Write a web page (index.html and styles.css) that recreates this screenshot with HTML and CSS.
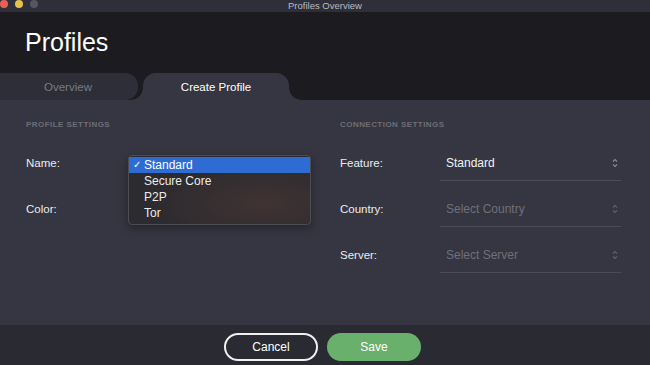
FILE: index.html
```html
<!DOCTYPE html>
<html lang="en">
<head>
    <meta charset="UTF-8">
    <meta name="viewport" content="width=device-width, initial-scale=1.0">
    <title>Profiles Overview</title>
    <link rel="stylesheet" href="styles.css">
</head>
<body>

<div class="titlebar">
    <div class="lights">
        <span class="light red"></span>
        <span class="light yellow"></span>
        <span class="light gray"></span>
    </div>
    <div class="window-title">Profiles Overview</div>
    <div></div>
</div>

<div class="header">
    <h1>Profiles</h1>
    <div class="tabs">
        <div class="tab">Overview</div>
        <div class="tab active">Create Profile</div>
    </div>
</div>

<div class="content">
    <div class="column">
        <div class="section-title">Profile Settings</div>
        <div class="row">
            <label>Name:</label>
            <div class="field-slot">
                <!-- open popup of the profile type select -->
                <div class="menu">
                    <div class="menu-item selected"><span class="check">&#10003;</span>Standard</div>
                    <div class="menu-item"><span class="check"></span>Secure Core</div>
                    <div class="menu-item"><span class="check"></span>P2P</div>
                    <div class="menu-item"><span class="check"></span>Tor</div>
                </div>
            </div>
        </div>
        <div class="row">
            <label>Color:</label>
            <div class="field-slot"></div>
        </div>
    </div>

    <div class="column">
        <div class="section-title">Connection Settings</div>
        <div class="row">
            <label>Feature:</label>
            <div class="select">
                <span>Standard</span>
                <svg class="chevron" width="6" height="10" viewBox="0 0 6 10"><path d="M1 3.5 L3 1.5 L5 3.5 M1 6.5 L3 8.5 L5 6.5" fill="none" stroke="currentColor" stroke-width="1.1"/></svg>
            </div>
        </div>
        <div class="row">
            <label>Country:</label>
            <div class="select placeholder">
                <span>Select Country</span>
                <svg class="chevron" width="6" height="10" viewBox="0 0 6 10"><path d="M1 3.5 L3 1.5 L5 3.5 M1 6.5 L3 8.5 L5 6.5" fill="none" stroke="currentColor" stroke-width="1.1"/></svg>
            </div>
        </div>
        <div class="row">
            <label>Server:</label>
            <div class="select placeholder">
                <span>Select Server</span>
                <svg class="chevron" width="6" height="10" viewBox="0 0 6 10"><path d="M1 3.5 L3 1.5 L5 3.5 M1 6.5 L3 8.5 L5 6.5" fill="none" stroke="currentColor" stroke-width="1.1"/></svg>
            </div>
        </div>
    </div>
</div>

<div class="footer">
    <button class="btn cancel">Cancel</button>
    <button class="btn save">Save</button>
</div>

</body>
</html>
```

FILE: styles.css
```css
body {
    margin: 0;
    width: 650px;
    height: 365px;
    overflow: hidden;
    font-family: "Liberation Sans", Arial, sans-serif;
    background: #353641;
    color: #e6e6e9;
}
.titlebar {
    height: 12px;
    background: #2e2f38;
    display: grid;
    grid-template-columns: 1fr auto 1fr;
    align-items: start;
}
.lights {
    display: flex;
    gap: 7px;
}
.light {
    width: 8px;
    height: 8px;
    border-radius: 50%;
}
.red { background: #ec5f57; }
.yellow { background: #e6c14c; }
.gray { background: #55565d; }
.window-title {
    font-size: 9.5px;
    line-height: 11px;
    color: #b9bac0;
}
.header {
    height: 88px;
    background: #1c1c20;
    display: flex;
    flex-direction: column;
}
h1 {
    margin: 0;
    padding: 15px 0 0 25px;
    font-size: 25px;
    line-height: 30px;
    font-weight: normal;
    color: #fff;
}
.tabs {
    margin-top: auto;
    display: flex;
    align-items: flex-end;
    height: 27px;
}
.tab {
    height: 27px;
    line-height: 28px;
    font-size: 11.5px;
    text-align: center;
    color: #797a85;
    background: #2d2e37;
    width: 136px;
    padding-right: 2px;
    border-radius: 0 13px 13px 0;
}
.tab.active {
    position: relative;
    width: 146px;
    padding-right: 0;
    margin-left: 5px;
    color: #fff;
    background: #353641;
    border-radius: 13px 13px 0 0;
}
.tab.active::before,
.tab.active::after {
    content: "";
    position: absolute;
    bottom: 0;
    width: 12px;
    height: 12px;
}
.tab.active::before {
    left: -12px;
    background: radial-gradient(circle at 0 0, transparent 11.5px, #353641 12px);
}
.tab.active::after {
    right: -12px;
    background: radial-gradient(circle at 100% 0, transparent 11.5px, #353641 12px);
}
.content {
    height: 225px;
    padding: 19px 0 0 26px;
    box-sizing: border-box;
    display: grid;
    grid-template-columns: 314px 281px;
    align-items: start;
}
.column {
    display: flex;
    flex-direction: column;
    gap: 11px;
}
.section-title {
    font-size: 8px;
    line-height: 12px;
    font-weight: bold;
    letter-spacing: 0.45px;
    text-transform: uppercase;
    color: #6c6d78;
    margin-bottom: 3px;
}
.row {
    display: grid;
    grid-template-columns: 100px 1fr;
    height: 35px;
    align-items: stretch;
}
.row label {
    font-size: 11.5px;
    line-height: 36px;
    color: #ececee;
}
.column:first-child .row {
    grid-template-columns: 102px 1fr;
}
.field-slot {
    position: relative;
}
.select {
    display: flex;
    align-items: center;
    justify-content: space-between;
    padding: 1px 3px 0 6px;
    border-bottom: 1px solid #4a4b56;
    font-size: 12px;
    color: #f2f2f4;
}
.select.placeholder {
    color: #6e6f7a;
}
.chevron {
    color: #8a8b95;
}
.select.placeholder .chevron {
    color: #5f606a;
}
.menu {
    position: absolute;
    top: 10px;
    left: 0;
    width: 181px;
    padding: 1px 0 3px;
    border: 1px solid #4d4c52;
    border-radius: 4px;
    background:
        radial-gradient(ellipse at 75% 70%, rgba(90, 60, 55, 0.45), transparent 60%),
        #2c2b2f;
    box-shadow: 0 3px 10px rgba(0, 0, 0, 0.35);
}
.menu-item {
    display: flex;
    height: 16px;
    line-height: 16px;
    font-size: 12px;
    color: #ececee;
}
.menu-item.selected {
    background: #2e6bd3;
    color: #fff;
}
.check {
    width: 15px;
    text-align: center;
    font-size: 10px;
}
.footer {
    height: 40px;
    background: #292a32;
    display: flex;
    justify-content: center;
    align-items: flex-start;
    padding: 8px 5px 0 0;
    box-sizing: border-box;
    gap: 9px;
}
.btn {
    width: 94px;
    height: 28px;
    border-radius: 14px;
    font-family: "Liberation Sans", Arial, sans-serif;
    font-size: 12px;
    color: #fff;
    cursor: pointer;
}
.cancel {
    background: transparent;
    border: 2px solid #f0f0f0;
}
.save {
    background: #6ab06d;
    border: none;
}
```
